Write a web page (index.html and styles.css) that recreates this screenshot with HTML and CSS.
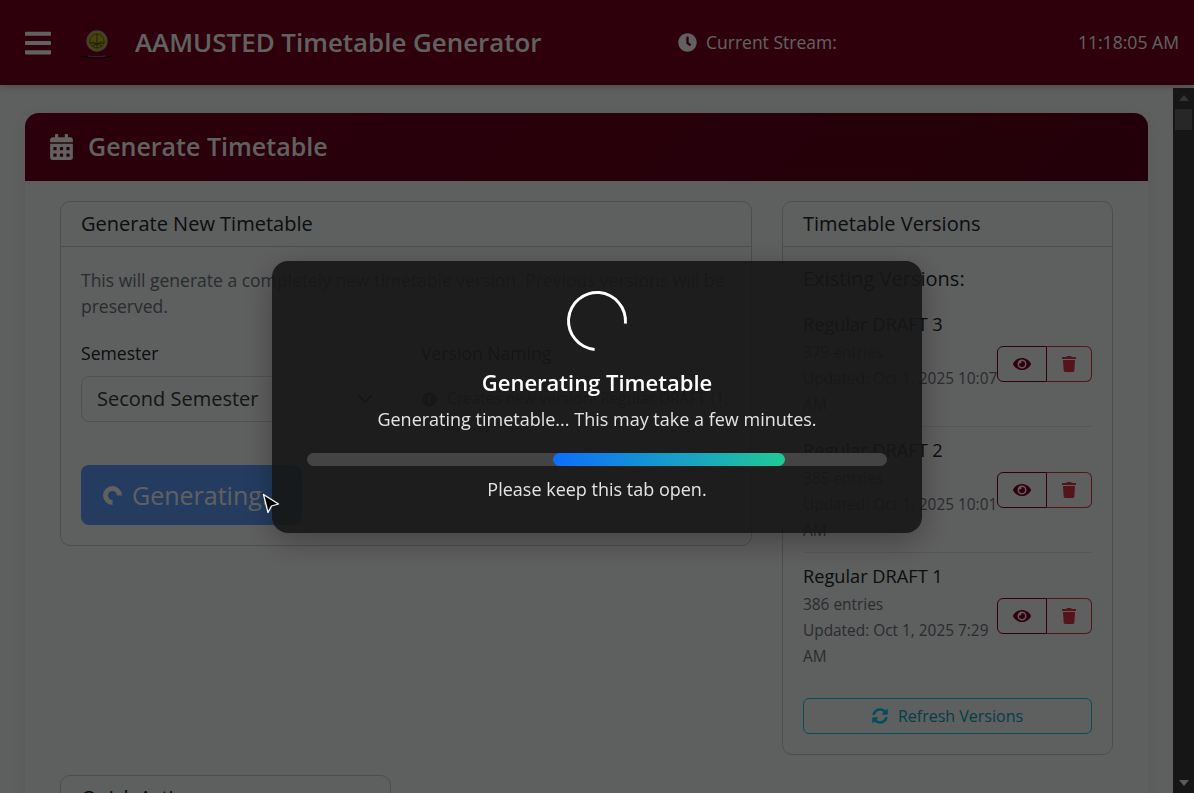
FILE: index.html
```html
<!DOCTYPE html>
<html lang="en">
<head>
<meta charset="utf-8">
<title>AAMUSTED Timetable Generator</title>
<link rel="stylesheet" href="styles.css">
</head>
<body>
<header class="topbar">
  <svg class="ico-bars" viewBox="0 0 448 512"><path d="M16 132h416c8.837 0 16-7.163 16-16V76c0-8.837-7.163-16-16-16H16C7.163 60 0 67.163 0 76v40c0 8.837 7.163 16 16 16zm0 160h416c8.837 0 16-7.163 16-16v-40c0-8.837-7.163-16-16-16H16c-8.837 0-16 7.163-16 16v40c0 8.837 7.163 16 16 16zm0 160h416c8.837 0 16-7.163 16-16v-40c0-8.837-7.163-16-16-16H16c-8.837 0-16 7.163-16 16v40c0 8.837 7.163 16 16 16z"/></svg>
  <svg class="logo" viewBox="0 0 40 36">
    <circle cx="19" cy="16" r="10" fill="#c8b41e" stroke="#a8a0a0" stroke-width="1.400"/>
    <circle cx="19" cy="16" r="7" fill="none" stroke="#5a6b20" stroke-width="1"/>
    <path d="M11 17c4 2.500 12 2.500 16 0M19 9v14M14 21.500l10-5M24 21.500l-10-5" stroke="#3f5a20" stroke-width="1" fill="none"/>
    <path d="M4 30.500c8 1.800 22 1.800 30 0l1.500 1c-8 2.500-25 2.500-33 0z" fill="#1c0008"/>
    <path d="M10 31c6 1 12 1 18 0" stroke="#a08890" stroke-width=".7" fill="none"/>
  </svg>
  <h1 class="brand">AAMUSTED Timetable Generator</h1>
  <div class="stream">
    <svg class="ico-clock" viewBox="0 0 512 512"><path d="M256,8C119,8,8,119,8,256S119,504,256,504,504,393,504,256,393,8,256,8Zm92.49,313h0l-20,25a16,16,0,0,1-22.49,2.5h0l-67-49.72a40,40,0,0,1-15-31.23V112a16,16,0,0,1,16-16h32a16,16,0,0,1,16,16V256l58,42.5A16,16,0,0,1,348.49,321Z"/></svg>
    <span>Current Stream:</span>
  </div>
  <div class="time">11:18:05 AM</div>
</header>

<div class="shell">
  <main class="main">
    <section class="panel">
      <div class="panel-head">
        <svg class="ico-cal" viewBox="0 0 448 512"><path d="M0 464c0 26.5 21.5 48 48 48h352c26.5 0 48-21.5 48-48V192H0v272zm320-196c0-6.6 5.4-12 12-12h40c6.6 0 12 5.4 12 12v40c0 6.6-5.4 12-12 12h-40c-6.6 0-12-5.4-12-12v-40zm0 128c0-6.6 5.4-12 12-12h40c6.6 0 12 5.4 12 12v40c0 6.6-5.4 12-12 12h-40c-6.6 0-12-5.4-12-12v-40zM192 268c0-6.6 5.4-12 12-12h40c6.6 0 12 5.4 12 12v40c0 6.6-5.4 12-12 12h-40c-6.6 0-12-5.4-12-12v-40zm0 128c0-6.6 5.4-12 12-12h40c6.6 0 12 5.4 12 12v40c0 6.6-5.4 12-12 12h-40c-6.6 0-12-5.4-12-12v-40zM64 268c0-6.6 5.4-12 12-12h40c6.6 0 12 5.4 12 12v40c0 6.6-5.4 12-12 12H76c-6.6 0-12-5.4-12-12v-40zm0 128c0-6.6 5.4-12 12-12h40c6.6 0 12 5.4 12 12v40c0 6.6-5.4 12-12 12H76c-6.6 0-12-5.4-12-12v-40zM400 64h-48V16c0-8.8-7.2-16-16-16h-32c-8.8 0-16 7.2-16 16v48H160V16c0-8.8-7.2-16-16-16h-32c-8.8 0-16 7.2-16 16v48H48C21.5 64 0 85.5 0 112v48h448v-48c0-26.5-21.5-48-48-48z"/></svg>
        <h2>Generate Timetable</h2>
      </div>
      <div class="panel-body">
        <div class="grid">
          <div class="left-col">
            <div class="card">
              <div class="card-head">Generate New Timetable</div>
              <div class="card-body">
                <p class="lead">This will generate a completely new timetable version. Previous versions will be preserved.</p>
                <div class="form-row">
                  <div class="field">
                    <div class="label">Semester</div>
                    <div class="select">
                      <span>Second Semester</span>
                      <svg class="chev" viewBox="0 0 16 16"><path d="M2 5l6 6 6-6" fill="none" stroke="#343a40" stroke-width="2" stroke-linecap="round" stroke-linejoin="round"/></svg>
                    </div>
                  </div>
                  <div class="field">
                    <div class="label">Version Naming</div>
                    <div class="note">
                      <svg class="ico-info" viewBox="0 0 512 512"><path d="M256 8C119.043 8 8 119.083 8 256c0 136.997 111.043 248 248 248s248-111.003 248-248C504 119.083 392.957 8 256 8zm0 110c23.196 0 42 18.804 42 42s-18.804 42-42 42-42-18.804-42-42 18.804-42 42-42zm56 254c0 6.627-5.373 12-12 12h-88c-6.627 0-12-5.373-12-12v-24c0-6.627 5.373-12 12-12h12v-64h-12c-6.627 0-12-5.373-12-12v-24c0-6.627 5.373-12 12-12h64c6.627 0 12 5.373 12 12v100h12c6.627 0 12 5.373 12 12v24z"/></svg>
                      <span>Creates new version: Regular DRAFT {1, 2, 3...}</span>
                    </div>
                  </div>
                </div>
                <button class="gen-btn"><span class="btn-spin"></span>Generating...</button>
              </div>
            </div>
          </div>
          <div class="right-col">
            <div class="card">
              <div class="card-head">Timetable Versions</div>
              <div class="card-body versions">
                <div class="v-title">Existing Versions:</div>
                <div class="v-item">
                  <div class="v-text">
                    <div class="v-name">Regular DRAFT 3</div>
                    <div class="v-meta">379 entries</div>
                    <div class="v-meta">Updated: Oct 1, 2025 10:07 AM</div>
                  </div>
                  <div class="btn-group">
                    <button class="ib ib-view"><svg viewBox="0 0 576 512"><path d="M572.52 241.4C518.29 135.59 410.93 64 288 64S57.68 135.64 3.48 241.41a32.35 32.35 0 0 0 0 29.19C57.71 376.41 165.07 448 288 448s230.32-71.64 284.52-177.41a32.35 32.35 0 0 0 0-29.19zM288 400a144 144 0 1 1 144-144 143.93 143.93 0 0 1-144 144zm0-240a95.31 95.31 0 0 0-25.31 3.79 47.85 47.85 0 0 1-66.9 66.9A95.78 95.78 0 1 0 288 160z"/></svg></button>
                    <button class="ib ib-del"><svg viewBox="0 0 448 512"><path d="M432 32H312l-9.4-18.7A24 24 0 0 0 281.1 0H166.8a23.72 23.72 0 0 0-21.4 13.3L136 32H16A16 16 0 0 0 0 48v32a16 16 0 0 0 16 16h416a16 16 0 0 0 16-16V48a16 16 0 0 0-16-16zM53.2 467a48 48 0 0 0 47.9 45h245.8a48 48 0 0 0 47.9-45L416 128H32z"/></svg></button>
                  </div>
                </div>
                <div class="v-item">
                  <div class="v-text">
                    <div class="v-name">Regular DRAFT 2</div>
                    <div class="v-meta">385 entries</div>
                    <div class="v-meta">Updated: Oct 1, 2025 10:01 AM</div>
                  </div>
                  <div class="btn-group">
                    <button class="ib ib-view"><svg viewBox="0 0 576 512"><path d="M572.52 241.4C518.29 135.59 410.93 64 288 64S57.68 135.64 3.48 241.41a32.35 32.35 0 0 0 0 29.19C57.71 376.41 165.07 448 288 448s230.32-71.64 284.52-177.41a32.35 32.35 0 0 0 0-29.19zM288 400a144 144 0 1 1 144-144 143.93 143.93 0 0 1-144 144zm0-240a95.31 95.31 0 0 0-25.31 3.79 47.85 47.85 0 0 1-66.9 66.9A95.78 95.78 0 1 0 288 160z"/></svg></button>
                    <button class="ib ib-del"><svg viewBox="0 0 448 512"><path d="M432 32H312l-9.4-18.7A24 24 0 0 0 281.1 0H166.8a23.72 23.72 0 0 0-21.4 13.3L136 32H16A16 16 0 0 0 0 48v32a16 16 0 0 0 16 16h416a16 16 0 0 0 16-16V48a16 16 0 0 0-16-16zM53.2 467a48 48 0 0 0 47.9 45h245.8a48 48 0 0 0 47.9-45L416 128H32z"/></svg></button>
                  </div>
                </div>
                <div class="v-item v-last">
                  <div class="v-text">
                    <div class="v-name">Regular DRAFT 1</div>
                    <div class="v-meta">386 entries</div>
                    <div class="v-meta">Updated: Oct 1, 2025 7:29 AM</div>
                  </div>
                  <div class="btn-group">
                    <button class="ib ib-view"><svg viewBox="0 0 576 512"><path d="M572.52 241.4C518.29 135.59 410.93 64 288 64S57.68 135.64 3.48 241.41a32.35 32.35 0 0 0 0 29.19C57.71 376.41 165.07 448 288 448s230.32-71.64 284.52-177.41a32.35 32.35 0 0 0 0-29.19zM288 400a144 144 0 1 1 144-144 143.93 143.93 0 0 1-144 144zm0-240a95.31 95.31 0 0 0-25.31 3.79 47.85 47.85 0 0 1-66.9 66.9A95.78 95.78 0 1 0 288 160z"/></svg></button>
                    <button class="ib ib-del"><svg viewBox="0 0 448 512"><path d="M432 32H312l-9.4-18.7A24 24 0 0 0 281.1 0H166.8a23.72 23.72 0 0 0-21.4 13.3L136 32H16A16 16 0 0 0 0 48v32a16 16 0 0 0 16 16h416a16 16 0 0 0 16-16V48a16 16 0 0 0-16-16zM53.2 467a48 48 0 0 0 47.9 45h245.8a48 48 0 0 0 47.9-45L416 128H32z"/></svg></button>
                  </div>
                </div>
                <button class="refresh"><svg viewBox="0 0 512 512"><path d="M370.72 133.28C339.458 104.008 298.888 87.962 255.848 88c-77.458.068-144.328 53.178-162.791 126.85-1.344 5.363-6.122 9.15-11.651 9.15H24.103c-7.498 0-13.194-6.807-11.807-14.176C33.933 94.924 134.813 8 256 8c66.448 0 126.791 26.136 171.315 68.685L463.03 40.97C478.149 25.851 504 36.559 504 57.941V192c0 13.255-10.745 24-24 24H345.941c-21.382 0-32.09-25.851-16.971-40.971l41.75-41.749zM32 296h134.059c21.382 0 32.09 25.851 16.971 40.971l-41.75 41.75c31.262 29.273 71.835 45.319 114.876 45.28 77.418-.07 144.315-53.144 162.787-126.849 1.344-5.363 6.122-9.15 11.651-9.15h57.304c7.498 0 13.194 6.807 11.807 14.176C478.067 417.076 377.187 504 256 504c-66.448 0-126.791-26.136-171.315-68.685L48.97 471.03C33.851 486.149 8 475.441 8 454.059V320c0-13.255 10.745-24 24-24z"/></svg>Refresh Versions</button>
              </div>
            </div>
          </div>
        </div>
        <div class="quick card">
          <div class="card-head">Quick Actions</div>
        </div>
      </div>
    </section>
  </main>
  <div class="scrollbar">
    <span class="arrow-up"></span>
    <span class="thumb"></span>
    <span class="track-fill"></span>
    <span class="arrow-down"></span>
  </div>
</div>

<div class="overlay">
  <div class="modal">
    <div class="spinner"></div>
    <div class="m-title">Generating Timetable</div>
    <div class="m-sub">Generating timetable... This may take a few minutes.</div>
    <div class="progress"><div class="progress-fill"></div></div>
    <div class="m-foot">Please keep this tab open.</div>
  </div>
  <svg class="cursor" viewBox="0 0 20 22"><path d="M1.500 1.500L16.500 11L9.500 13L6 19.500Z" fill="#000" stroke="#fff" stroke-width="1.300" stroke-linejoin="round"/></svg>
</div>
</body>
</html>
```

FILE: styles.css
```css
* { box-sizing: border-box; }
html, body { margin: 0; height: 793px; overflow: hidden; }
body {
  font-family: "Open Sans", "Noto Sans", sans-serif;
  font-size: 17.6px;
  line-height: 26px;
  color: #212529;
  background: #f8f9fa;
  display: flex;
  flex-direction: column;
}
.topbar {
  flex: none;
  height: 85px;
  background: #7a0020;
  color: #fff;
  display: flex;
  align-items: center;
  padding: 0 15px 0 25px;
  box-shadow: 0 2px 6px rgba(0,0,0,.2);
  position: relative;
  z-index: 1;
}
.ico-bars { width: 26px; height: 30px; fill: #fff; flex: none; }
.logo { width: 40px; height: 36px; margin-left: 27px; flex: none; }
.brand { margin: -2px 0 0 17px; font-size: 25.9px; line-height: 34px; font-weight: 600; width: 543px; flex: none; white-space: nowrap; }
.stream { display: flex; align-items: center; gap: 9px; margin-top: -1px; font-size: 17.5px; flex: none; }
.ico-clock { width: 19px; height: 19px; fill: #fff; }
.time { margin-left: auto; margin-top: -1px; font-size: 17.6px; }

.shell { flex: 1; min-height: 0; display: flex; margin-top: 3px; }
.main { flex: 1; min-width: 0; overflow: hidden; padding: 25px 25px 0; }
.panel { border-radius: 14px 14px 0 0; box-shadow: 0 4px 16px rgba(0,0,0,.07); }
.panel-head {
  height: 68px;
  background: linear-gradient(135deg, #720020, #5c0018);
  border-radius: 14px 14px 0 0;
  color: #fff;
  display: flex;
  align-items: center;
  padding-left: 25px;
  gap: 15px;
}
.ico-cal { width: 23px; height: 26px; fill: #fff; flex: none; }
.panel-head h2 { margin: -2px 0 0; font-size: 25px; line-height: 32px; font-weight: 600; }
.panel-body { padding: 20px 35px 0; background: #f8f9fa; }
.grid { display: grid; grid-template-columns: 692px 331px; column-gap: 30px; align-items: start; }
.card { background: #f8f9fa; border: 1px solid #c8cbcf; border-radius: 10px; }
.card-head { height: 45px; padding: 8px 20px 0; font-size: 20px; line-height: 28px; border-bottom: 1px solid #c8cbcf; }
.card-body { padding: 20px; }
.lead { margin: 0 0 21px; color: #6c757d; font-size: 17.5px; }
.form-row { display: grid; grid-template-columns: 310px 310px; column-gap: 30px; }
.label { margin-bottom: 10px; color: #212529; }
.select {
  height: 46px;
  border: 1px solid #ced4da;
  border-radius: 8px;
  font-size: 20px;
  display: flex;
  align-items: center;
  justify-content: space-between;
  padding: 0 17px 0 15px;
  color: #343a40;
}
.chev { width: 16px; height: 16px; }
.note { display: flex; gap: 10px; font-size: 15.4px; line-height: 26px; color: #6c757d; padding-top: 10px; }
.ico-info { width: 15px; height: 15px; margin-top: 6px; margin-left: 1px; fill: #555; flex: none; }
.gen-btn {
  margin-top: 27px;
  height: 60px;
  width: 221px;
  border: 0;
  border-radius: 8px;
  background: #0d6efd;
  opacity: .65;
  color: #fff;
  font: inherit;
  font-size: 25px;
  display: flex;
  align-items: center;
  padding: 0 0 0 22px;
  gap: 10px;
  white-space: nowrap;
  overflow: visible;
}
.btn-spin { width: 19px; height: 19px; border-radius: 50%; border: 5px solid #fff; border-right-color: transparent; transform: rotate(45deg); flex: none; }
.v-title { font-size: 20px; line-height: 28px; margin-bottom: 8px; margin-top: -2px; }
.versions { padding-bottom: 20px; }
.v-item { display: flex; align-items: center; border-bottom: 1px solid #dee2e6; padding: 10px 0 8px; }
.v-last { border-bottom: 0; padding-bottom: 10px; }
.v-text { flex: 1; min-width: 0; margin-right: -4px; }
.v-name { font-size: 18.2px; line-height: 26px; font-weight: 500; margin-bottom: 3px; }
.v-meta { font-size: 15.4px; line-height: 26px; color: #6c757d; }
.btn-group { display: flex; flex: none; width: 95px; height: 36px; margin-top: -1px; }
.ib { height: 36px; background: transparent; border: 1px solid; padding: 0; display: flex; align-items: center; justify-content: center; }
.ib-view { width: 50px; border-color: #800020; border-radius: 6px 0 0 6px; }
.ib-view svg { width: 18px; height: 16px; fill: #800020; }
.ib-del { width: 45px; margin-left: 0; border-color: #dc3545; border-left: 0; border-radius: 0 6px 6px 0; }
.ib-del svg { width: 14px; height: 16px; fill: #dc3545; }
.refresh {
  width: 100%;
  height: 36px;
  margin-top: 18px;
  background: transparent;
  border: 1px solid #0dcaf0;
  border-radius: 6px;
  color: #0aa2c0;
  font: inherit;
  font-size: 16px;
  display: flex;
  align-items: center;
  justify-content: center;
  gap: 10px;
}
.refresh svg { width: 16px; height: 16px; fill: #0dcaf0; }
.quick { width: 331px; margin-top: 20px; height: 120px; }

.scrollbar { flex: none; width: 21px; background: #3b3b3b; display: flex; flex-direction: column; align-items: center; padding-top: 7px; }
.arrow-up { width: 0; height: 0; border: 5px solid transparent; border-top: 0; border-bottom: 6px solid #8a8a8a; }
.thumb { width: 17px; height: 21px; background: #666; margin-top: 8px; }
.track-fill { flex: 1; }
.arrow-down { width: 0; height: 0; border: 5px solid transparent; border-bottom: 0; border-top: 6px solid #eee; margin-bottom: 7px; }

.overlay {
  position: fixed;
  inset: 0;
  background: rgba(0,0,0,.62);
  display: flex;
  align-items: flex-start;
  justify-content: center;
  z-index: 10;
}
.modal {
  width: 650px;
  height: 272px;
  margin-top: 261px;
  background: rgba(22,22,22,.9);
  border-radius: 16px;
  box-shadow: 0 8px 32px rgba(0,0,0,.3);
  padding: 30px 35px 0;
  color: #fff;
  display: flex;
  flex-direction: column;
  align-items: center;
  text-align: center;
}
.spinner { width: 60px; height: 60px; border: 3.5px solid #fff; border-bottom-color: transparent; border-radius: 50%; transform: rotate(-40deg); flex: none; }
.m-title { font-size: 22px; line-height: 30px; font-weight: 600; margin-top: 16px; }
.m-sub { font-size: 18px; line-height: 26px; color: #e4e4e4; margin-top: 9px; }
.progress { width: 100%; height: 13px; background: #444; border-radius: 7px; margin-top: 21px; overflow: hidden; flex: none; }
.progress-fill { width: 232px; height: 100%; margin-left: 246px; border-radius: 7px; background: linear-gradient(90deg, #0d6efd, #20c997); }
.m-foot { font-size: 18px; line-height: 26px; color: #e4e4e4; margin-top: 10px; }
.cursor { position: absolute; left: 262px; top: 493px; width: 20px; height: 22px; }
```
